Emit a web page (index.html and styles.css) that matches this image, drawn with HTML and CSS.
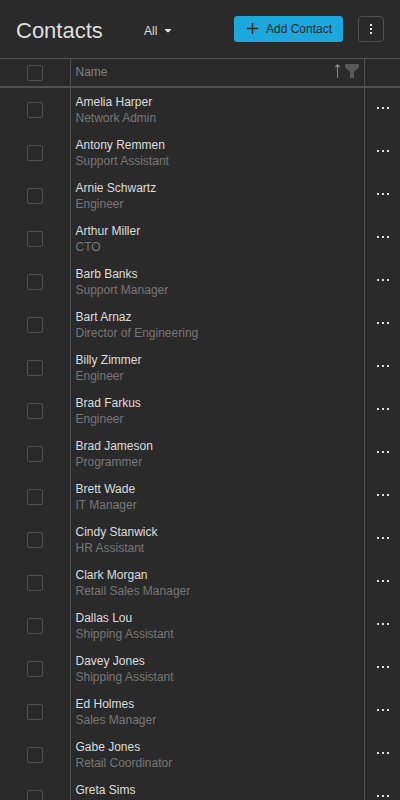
FILE: index.html
```html
<!DOCTYPE html>
<html lang="en">
<head>
<meta charset="utf-8">
<title>Contacts</title>
<link rel="stylesheet" href="styles.css">
</head>
<body>
<header class="toolbar">
  <h1 class="title">Contacts</h1>
  <button class="filter">All <svg width="6" height="4" viewBox="0 0 6 4"><path d="M0 0h6v1L3.6 3.2H2.4L0 1z" fill="currentColor"/></svg></button>
  <button class="add"><svg width="11" height="12" viewBox="0 0 11 12"><path d="M5.5 0v11M0 5.5h11" stroke="currentColor" stroke-width="1.5"/></svg>Add Contact</button>
  <button class="more" aria-label="More"><svg width="2" height="10" viewBox="0 0 2 10"><path d="M0 0h2v2H0zM0 4h2v2H0zM0 8h2v2H0z" fill="currentColor"/></svg></button>
</header>
<main class="grid" id="grid">
  <div class="row head">
    <div class="cell check"><span class="box"></span></div>
    <div class="cell name"><span>Name</span><span class="icons"><svg width="5" height="14" viewBox="0 0 5 14"><path d="M2 0h1v1h1v1h1v1H3v11H2V3H0V2h1V1h1z" fill="#858585"/></svg><svg width="14" height="14" viewBox="0 0 14 14"><path d="M0 0h14v3L9 8v6H5V8L0 3z" fill="#595959"/></svg></span></div>
    <div class="cell menu"></div>
  </div>
</main>
<script src="script.js"></script>
</body>
</html>
```
FILE: styles.css
```css
* { box-sizing: border-box; }
body { margin: 0; height: 800px; overflow: hidden; background: #2a2a2a; color: #dedede; font: 12px/16px "Liberation Sans", Arial, sans-serif; }
button { font: inherit; border: 0; background: none; color: inherit; padding: 0; display: flex; align-items: center; }
svg { display: block; flex: none; }
.toolbar { height: 58px; display: flex; align-items: center; padding: 0 16px; }
.title { margin: 3px 0 0; width: 128px; font-size: 22px; line-height: 26px; font-weight: 400; }
.filter { gap: 8px; margin-top: 3px; }
.add { margin-left: auto; width: 109px; height: 26px; border-radius: 3px; background: #1ca8dd; color: #2a2a2a; padding-left: 13px; gap: 8px; }
.more { margin-left: 15px; width: 26px; height: 26px; border: 1px solid #515151; border-radius: 4px; justify-content: center; }
.row { display: grid; grid-template-columns: 71px 294px 35px; height: 43px; }
.head { height: 30px; border-top: 1px solid #515151; border-bottom: 2px solid #515151; color: #808080; }
.cell { border-right: 1px solid #515151; }
.check { display: flex; justify-content: center; align-items: center; }
.box { width: 16px; height: 16px; border: 1px solid #515151; border-radius: 2px; }
.name { padding: 6px 5px 0 4.5px; }
.head .name { display: flex; justify-content: space-between; padding-top: 5px; }
.icons { display: flex; gap: 5px; }
.role { color: #777; }
.menu { border-right: 0; padding: 19px 0 0 12px; }
```
FILE: script.js
```js
const people = [["Amelia Harper","Network Admin"],["Antony Remmen","Support Assistant"],["Arnie Schwartz","Engineer"],["Arthur Miller","CTO"],["Barb Banks","Support Manager"],["Bart Arnaz","Director of Engineering"],["Billy Zimmer","Engineer"],["Brad Farkus","Engineer"],["Brad Jameson","Programmer"],["Brett Wade","IT Manager"],["Cindy Stanwick","HR Assistant"],["Clark Morgan","Retail Sales Manager"],["Dallas Lou","Shipping Assistant"],["Davey Jones","Shipping Assistant"],["Ed Holmes","Sales Manager"],["Gabe Jones","Retail Coordinator"],["Greta Sims",""]];
document.getElementById("grid").insertAdjacentHTML("beforeend", people.map(([name, role]) => `<div class="row"><div class="cell check"><span class="box"></span></div><div class="cell name"><div>${name}</div><div class="role">${role}</div></div><div class="cell menu"><svg width="12" height="2" viewBox="0 0 12 2"><path d="M0 0h2v2H0zM5 0h2v2H5zM10 0h2v2h-2z" fill="currentColor"/></svg></div></div>`).join(""));
```
